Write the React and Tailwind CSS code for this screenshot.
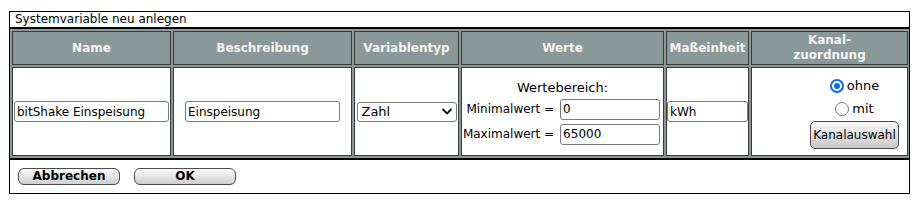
import React from "react";

const font = { fontFamily: '"DejaVu Sans", Verdana, sans-serif' };

const HeadCell = ({ children }) => (
  <div className="flex items-center justify-center border border-[#3a3a3a] bg-[#8a9899] text-center text-[12px] font-bold leading-[15px] text-[#f4f4f4]">
    {children}
  </div>
);

const BodyCell = ({ children, className = "" }) => (
  <div className={`flex items-center border border-[#3a3a3a] bg-white ${className}`}>
    {children}
  </div>
);

const TextBox = ({ value, className = "" }) => (
  <input
    readOnly
    value={value}
    style={font}
    className={`h-[21px] rounded-[3px] border border-[#7a7a7a] bg-white px-[2px] text-[12px] text-black outline-none ${className}`}
  />
);

const Radio = ({ checked, label }) => (
  <label className="flex items-center gap-[3px] text-[13px] leading-[16px] text-black">
    {checked ? (
      <span className="flex h-[14px] w-[14px] items-center justify-center rounded-full bg-[#0a6cf2]">
        <span className="h-[10px] w-[10px] rounded-full border-2 border-white bg-[#0a6cf2]" />
      </span>
    ) : (
      <span className="h-[14px] w-[14px] rounded-full border border-[#7a7a7a] bg-white" />
    )}
    {label}
  </label>
);

const PillButton = ({ children }) => (
  <button
    style={font}
    className="h-[17px] w-[102px] rounded-[6px] border border-[#4a4a4a] bg-gradient-to-b from-[#fbfbfb] to-[#cfcfcf] text-[12px] font-bold leading-[15px] text-black"
  >
    {children}
  </button>
);

export default function App() {
  return (
    <div className="h-[203px] bg-white pl-[9px] pt-[11px]" style={font}>
      <div className="w-[901px] border border-black">
        <div className="h-[17px] border-b-2 border-black px-[5px] text-[12px] leading-[15px] text-black">
          Systemvariable neu anlegen
        </div>

        <div className="grid grid-cols-[159px_179px_105px_203px_83px_157px] grid-rows-[34px_89px] gap-[2px] bg-[#8a9899] py-[2px] pl-[2px]">
          <HeadCell>Name</HeadCell>
          <HeadCell>Beschreibung</HeadCell>
          <HeadCell>Variablentyp</HeadCell>
          <HeadCell>Werte</HeadCell>
          <HeadCell>Maßeinheit</HeadCell>
          <HeadCell>
            Kanal-
            <br />
            zuordnung
          </HeadCell>

          <BodyCell className="justify-center">
            <TextBox value="bitShake Einspeisung" className="w-[155px]" />
          </BodyCell>
          <BodyCell className="justify-center">
            <TextBox value="Einspeisung" className="w-[155px]" />
          </BodyCell>
          <BodyCell className="justify-center">
            <div className="flex h-[20px] w-[100px] items-center justify-between rounded-[3px] border border-[#7a7a7a] bg-white pl-[4px] pr-[4px] text-[13px] text-black">
              <span>Zahl</span>
              <svg width="10" height="7" viewBox="0 0 10 7" fill="none">
                <path d="M1 1.5 L5 5.5 L9 1.5" stroke="#111" strokeWidth="1.8" strokeLinecap="round" strokeLinejoin="round" />
              </svg>
            </div>
          </BodyCell>
          <BodyCell className="flex-col justify-center pt-[1px]">
            <div className="text-[13px] leading-[16px] text-black">Wertebereich:</div>
            <div className="mt-[3px] grid grid-cols-[auto_auto] items-center gap-x-[6px] gap-y-[4px] pr-[2px] text-[12px] text-black">
              <span className="whitespace-nowrap text-right">Minimalwert =</span>
              <TextBox value="0" className="w-[100px]" />
              <span className="whitespace-nowrap text-right">Maximalwert =</span>
              <TextBox value="65000" className="w-[100px]" />
            </div>
          </BodyCell>
          <BodyCell className="justify-center">
            <TextBox value="kWh" className="w-[81px]" />
          </BodyCell>
          <BodyCell className="justify-end pr-[8px]">
            <div className="flex flex-col items-center pt-[4px]">
              <Radio checked label="ohne" />
              <div className="mt-[7px]">
                <Radio label="mit" />
              </div>
              <button
                style={font}
                className="mt-[4px] h-[28px] w-[89px] rounded-[5px] border border-[#4a4a4a] bg-gradient-to-b from-[#f8f8f8] to-[#c9c9c9] text-[12px] text-black"
              >
                Kanalauswahl
              </button>
            </div>
          </BodyCell>
        </div>

        <div className="flex h-[35px] items-center gap-[14px] border-t-2 border-black pl-[8px]">
          <PillButton>Abbrechen</PillButton>
          <PillButton>OK</PillButton>
        </div>
      </div>
    </div>
  );
}
